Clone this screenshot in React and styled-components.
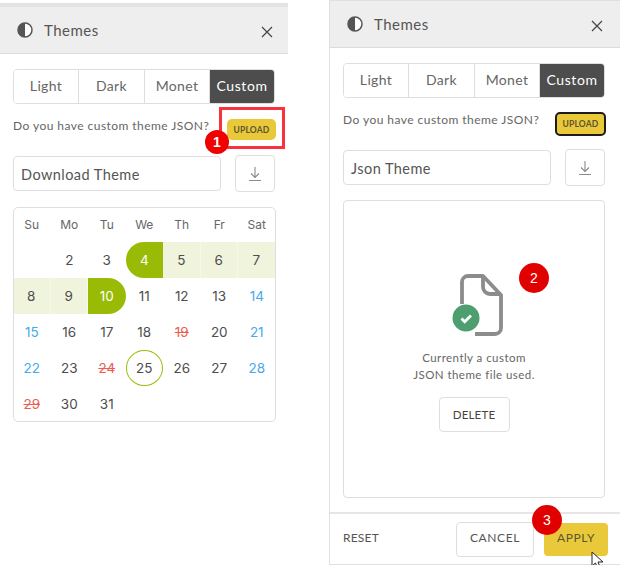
import React from "react";
import styled, { createGlobalStyle } from "styled-components";

const Global = createGlobalStyle`
  html, body {
    margin: 0;
    padding: 0;
    background: #fff;
  }
  body {
    width: 620px;
    height: 565px;
    overflow: hidden;
    font-family: "Lato", "Liberation Sans", sans-serif;
    color: #4d4d4d;
  }
`;

const Page = styled.div`
  display: flex;
  align-items: flex-start;
  width: 620px;
  height: 565px;
`;

const Panel = styled.section`
  position: relative;
  box-sizing: border-box;
  display: flex;
  flex-direction: column;
  flex: none;
  width: ${(p) => p.$width}px;
  height: ${(p) => p.$height}px;
  margin-top: ${(p) => p.$top}px;
  margin-left: ${(p) => p.$left}px;
  border-top: ${(p) => (p.$framed ? "1px solid #e0e0e0" : "4px solid #e3e3e3")};
  border-left: ${(p) => (p.$framed ? "1px solid #e0e0e0" : "none")};
  border-bottom: ${(p) => (p.$framed ? "1px solid #e0e0e0" : "none")};
`;

const Header = styled.header`
  box-sizing: border-box;
  display: flex;
  align-items: center;
  flex: none;
  height: 47px;
  padding: 0 ${(p) => p.$right}px 0 17px;
  background: #eeeeee;
  border-bottom: 1px solid #dcdcdc;
`;

const Title = styled.h2`
  flex: 1;
  margin: 0 0 0 11px;
  font-size: 15px;
  font-weight: 400;
  letter-spacing: 0.5px;
  color: #555;
`;

const CloseSvg = styled.svg`
  margin-top: 3px;
`;

const Body = styled.div`
  display: flex;
  flex-direction: column;
  flex: 1;
  padding: 15px 12px 0 13px;
`;

const Segments = styled.div`
  box-sizing: border-box;
  display: grid;
  grid-template-columns: 65px 66px 65px 1fr;
  width: 262px;
  height: 35px;
  border: 1px solid #dedede;
  border-radius: 4px;
  overflow: hidden;
`;

const Segment = styled.div`
  display: flex;
  align-items: center;
  justify-content: center;
  padding-bottom: 3px;
  font-size: 14px;
  letter-spacing: ${(p) => (p.$active ? "0.6px" : "0.35px")};
  color: ${(p) => (p.$active ? "#fff" : "#666")};
  background: ${(p) => (p.$active ? "#4d4d4d" : "#fff")};
  border-right: ${(p) => (p.$last ? "none" : "1px solid #dedede")};
`;

const UploadRow = styled.div`
  display: flex;
  align-items: center;
  justify-content: space-between;
  width: 263px;
  height: 24px;
  margin-top: 13px;
`;

const UploadText = styled.span`
  font-size: 12px;
  letter-spacing: 0.45px;
  color: #666;
  margin-top: -7px;
`;

const UploadButton = styled.button`
  box-sizing: border-box;
  width: ${(p) => (p.$outlined ? 51 : 49)}px;
  height: ${(p) => (p.$outlined ? 24 : 21)}px;
  margin-top: ${(p) => (p.$outlined ? 2 : 1)}px;
  padding: 0;
  font-family: inherit;
  font-size: 8.5px;
  font-weight: 700;
  letter-spacing: 0.2px;
  color: #5c5530;
  background: #e9c93a;
  border: ${(p) => (p.$outlined ? "2px solid #1c1c1c" : "none")};
  border-radius: 5px;
`;

const DownloadRow = styled.div`
  display: flex;
  align-items: center;
  justify-content: space-between;
  width: 262px;
  margin-top: 14px;
`;

const NameInput = styled.div`
  box-sizing: border-box;
  display: flex;
  align-items: center;
  width: 208px;
  height: 35px;
  padding: 1px 0 0 7px;
  font-size: 14.5px;
  letter-spacing: 0.45px;
  color: #555;
  border: 1px solid #dedede;
  border-radius: 4px;
`;

const DownloadButton = styled.div`
  box-sizing: border-box;
  display: flex;
  align-items: center;
  justify-content: center;
  width: 40px;
  height: 37px;
  border: 1px solid #dedede;
  border-radius: 4px;
`;

const Calendar = styled.div`
  width: 262.5px;
  height: 215px;
  margin-top: 15px;
  outline: 1px solid #dedede;
  outline-offset: -1px;
  border-radius: 5px;
  overflow: hidden;
  display: grid;
  grid-template-columns: repeat(7, 37.5px);
  grid-template-rows: 35px repeat(5, 36px);
  font-family: "Inter", "Liberation Sans", sans-serif;
`;

const Weekday = styled.div`
  display: flex;
  align-items: center;
  justify-content: center;
  font-size: 12px;
  color: #666;
`;

const dayColor = { weekend: "#45a9ec", off: "#ee5b50" };
const dayBg = { range: "#f0f4dc", start: "#9abb06", end: "#9abb06" };
const dayRadius = { start: "18px 0 0 18px", end: "0 18px 18px 0", today: "50%" };

const Day = styled.div`
  box-sizing: border-box;
  display: flex;
  align-items: center;
  justify-content: center;
  font-size: 13.5px;
  color: ${(p) =>
    p.$kind === "start" || p.$kind === "end" ? "#fff" : dayColor[p.$kind] || "#4d4d4d"};
  background: ${(p) => dayBg[p.$kind] || "transparent"};
  border-radius: ${(p) => dayRadius[p.$kind] || 0};
  border: ${(p) => (p.$kind === "today" ? "1px solid #9abb06" : "none")};
  border-right: ${(p) => p.$kind === "range" && "1px solid #f6f8ea"};
  text-decoration: ${(p) => (p.$kind === "off" ? "line-through" : "none")};
`;

const Card = styled.div`
  box-sizing: border-box;
  display: flex;
  flex-direction: column;
  align-items: center;
  width: 262px;
  height: 298px;
  margin-top: 14px;
  padding-top: 73px;
  border: 1px solid #dedede;
  border-radius: 4px;
`;

const FileSvg = styled.svg`
  margin-left: 7px;
`;

const CardText = styled.p`
  margin: 13px 0 0;
  font-size: 11.5px;
  line-height: 17px;
  letter-spacing: 0.45px;
  text-align: center;
  color: #666;
`;

const DeleteButton = styled.button`
  box-sizing: border-box;
  width: 71px;
  height: 35px;
  margin-top: 14px;
  padding: 0;
  font-family: inherit;
  font-size: 11.5px;
  letter-spacing: 0.2px;
  color: #444;
  background: #fff;
  border: 1px solid #dedede;
  border-radius: 4px;
`;

const Footer = styled.footer`
  box-sizing: border-box;
  display: flex;
  align-items: center;
  flex: none;
  height: 52px;
  padding: 0 12px 0 13px;
  border-top: 2px solid #e6e6e6;
`;

const ResetLink = styled.span`
  flex: 1;
  padding-bottom: 4px;
  font-size: 12px;
  letter-spacing: 0.2px;
  color: #555;
`;

const FooterButton = styled.button`
  box-sizing: border-box;
  width: ${(p) => (p.$primary ? 64 : 78)}px;
  height: ${(p) => (p.$primary ? 33 : 35)}px;
  margin-left: ${(p) => (p.$primary ? 10 : 0)}px;
  padding: 0 0 4px;
  font-family: inherit;
  font-size: 12px;
  letter-spacing: 0.6px;
  color: ${(p) => (p.$primary ? "#5c5530" : "#555")};
  background: ${(p) => (p.$primary ? "#e9c93a" : "#fff")};
  border: ${(p) => (p.$primary ? "none" : "1px solid #dedede")};
  border-radius: 4px;
`;

const Badge = styled.span`
  position: absolute;
  display: flex;
  align-items: center;
  justify-content: center;
  width: ${(p) => p.$size}px;
  height: ${(p) => p.$size}px;
  left: ${(p) => p.$x}px;
  top: ${(p) => p.$y}px;
  border-radius: 50%;
  font-family: "Liberation Sans", sans-serif;
  font-size: 14px;
  font-weight: ${(p) => (p.$bold ? 700 : 400)};
  color: #fff;
  background: ${(p) => (p.$bold ? "#f00000" : "#e00000")};
`;

const Highlight = styled.div`
  position: absolute;
  left: 219px;
  top: 100px;
  width: 66px;
  height: 42px;
  box-sizing: border-box;
  border: 3px solid #f9333d;
`;

const Pointer = styled.svg`
  position: absolute;
  left: 261px;
  top: 550px;
`;

const ThemeIcon = () => (
  <svg width="16" height="16" viewBox="0 0 16 16">
    <circle cx="8" cy="8" r="7" fill="#fff" stroke="#555" strokeWidth="1.5" />
    <path d="M8 1a7 7 0 0 0 0 14z" fill="#555" />
  </svg>
);

const CloseIcon = () => (
  <CloseSvg width="12" height="12" viewBox="0 0 12 12">
    <path d="M1 1l10 10M11 1L1 11" stroke="#444" strokeWidth="1.2" />
  </CloseSvg>
);

const DownloadIcon = () => (
  <svg width="14" height="16" viewBox="0 0 14 16" fill="none" stroke="#8a8a8a" strokeWidth="1.1">
    <path d="M7 1v10M3 7.5L7 11.5l4-4M1 14.5h12" />
  </svg>
);

const FileIcon = () => (
  <FileSvg width="52" height="62" viewBox="0 0 52 62" fill="none">
    <path
      d="M10 30V8a6 6 0 0 1 6-6h15l18 19v33a6 6 0 0 1-6 6H23"
      stroke="#8c8c8c"
      strokeWidth="3.8"
      strokeLinejoin="round"
    />
    <path d="M31 2v11a7 7 0 0 0 7 7h11" stroke="#8c8c8c" strokeWidth="3.8" />
    <circle cx="14" cy="44" r="13.5" fill="#4d9f6f" />
    <path d="M9.5 44.5l3.2 3.2L19 41.5" stroke="#fff" strokeWidth="2.8" />
  </FileSvg>
);

const weekdays = ["Su", "Mo", "Tu", "We", "Th", "Fr", "Sat"];

// blank first cell, then day number + how it is marked
const days = [
  [null],
  [2], [3], [4, "start"], [5, "range"], [6, "range"], [7, "range"],
  [8, "range"], [9, "range"], [10, "end"], [11], [12], [13], [14, "weekend"],
  [15, "weekend"], [16], [17], [18], [19, "off"], [20], [21, "weekend"],
  [22, "weekend"], [23], [24, "off"], [25, "today"], [26], [27], [28, "weekend"],
  [29, "off"], [30], [31],
];

const tabs = ["Light", "Dark", "Monet", "Custom"];

const Tabs = () => (
  <Segments>
    {tabs.map((t, i) => (
      <Segment key={t} $active={t === "Custom"} $last={i === 3}>
        {t}
      </Segment>
    ))}
  </Segments>
);

const PanelHeader = ({ right }) => (
  <Header $right={right}>
    <ThemeIcon />
    <Title>Themes</Title>
    <CloseIcon />
  </Header>
);

export default function App() {
  return (
    <Page>
      <Global />
      <Panel $width={288} $height={430} $top={3} $left={0}>
        <PanelHeader right={15} />
        <Body>
          <Tabs />
          <UploadRow>
            <UploadText>Do you have custom theme JSON?</UploadText>
            <UploadButton>UPLOAD</UploadButton>
          </UploadRow>
          <DownloadRow>
            <NameInput>Download Theme</NameInput>
            <DownloadButton>
              <DownloadIcon />
            </DownloadButton>
          </DownloadRow>
          <Calendar>
            {weekdays.map((w) => (
              <Weekday key={w}>{w}</Weekday>
            ))}
            {days.map(([n, kind], i) => (
              <Day key={i} $kind={kind}>
                {n}
              </Day>
            ))}
          </Calendar>
        </Body>
        <Highlight />
        <Badge $size={24} $x={205} $y={123} $bold>
          1
        </Badge>
      </Panel>

      <Panel $width={291} $height={565} $top={0} $left={41} $framed>
        <PanelHeader right={17} />
        <Body>
          <Tabs />
          <UploadRow>
            <UploadText>Do you have custom theme JSON?</UploadText>
            <UploadButton $outlined>UPLOAD</UploadButton>
          </UploadRow>
          <DownloadRow>
            <NameInput>Json Theme</NameInput>
            <DownloadButton>
              <DownloadIcon />
            </DownloadButton>
          </DownloadRow>
          <Card>
            <FileIcon />
            <CardText>
              Currently a custom
              <br />
              JSON theme file used.
            </CardText>
            <DeleteButton>DELETE</DeleteButton>
          </Card>
        </Body>
        <Footer>
          <ResetLink>RESET</ResetLink>
          <FooterButton>CANCEL</FooterButton>
          <FooterButton $primary>APPLY</FooterButton>
        </Footer>
        <Badge $size={30} $x={189} $y={262}>
          2
        </Badge>
        <Badge $size={30} $x={202} $y={504}>
          3
        </Badge>
        <Pointer width="13" height="19" viewBox="0 0 13 19">
          <path d="M1 1v14l3.5-3 2.5 6 2.5-1-2.5-6H12z" fill="#fff" stroke="#222" strokeWidth="1" />
        </Pointer>
      </Panel>
    </Page>
  );
}
